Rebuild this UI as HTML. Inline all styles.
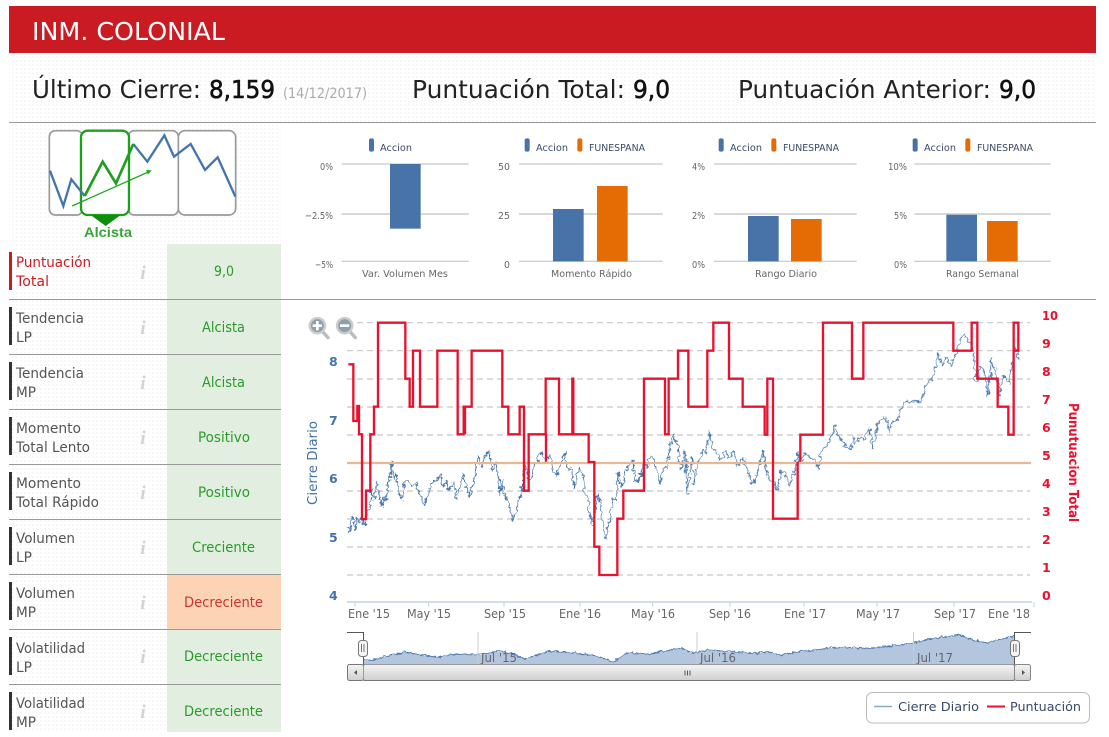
<!DOCTYPE html>
<html><head><meta charset="utf-8"><style>
html,body{margin:0;padding:0;background:#fff;overflow:hidden}
svg{display:block}
text{font-family:"DejaVu Sans","Liberation Sans",sans-serif}
</style></head><body>
<svg xmlns="http://www.w3.org/2000/svg" width="1109" height="737" viewBox="0 0 1109 737">
<defs><pattern id="d" width="4" height="4" patternUnits="userSpaceOnUse"><rect width="4" height="4" fill="#fff"/><rect width="2" height="2" fill="#f8f8f8"/></pattern>
<filter id="j" filterUnits="userSpaceOnUse" x="340" y="320" width="700" height="290" color-interpolation-filters="sRGB"><feTurbulence type="fractalNoise" baseFrequency="0.22" numOctaves="2" seed="4"/><feDisplacementMap in="SourceGraphic" scale="7" xChannelSelector="R" yChannelSelector="G"/></filter>
<filter id="k" filterUnits="userSpaceOnUse" x="360" y="625" width="660" height="42" color-interpolation-filters="sRGB"><feTurbulence type="fractalNoise" baseFrequency="0.3" numOctaves="2" seed="7"/><feDisplacementMap in="SourceGraphic" scale="4" xChannelSelector="R" yChannelSelector="G"/></filter>
</defs>
<rect width="1109" height="737" fill="#fff"/>
<rect x="9" y="53" width="1087" height="69" fill="url(#d)"/>
<rect x="9" y="123" width="272" height="609" fill="url(#d)"/>
<rect x="9" y="6" width="1087" height="47" fill="#cb1b22"/>
<text x="32" y="40" font-size="25" fill="#fff" textLength="193" lengthAdjust="spacingAndGlyphs">INM. COLONIAL</text>
<g font-size="25" fill="#222">
<text x="32" y="98" textLength="169" lengthAdjust="spacingAndGlyphs">Último Cierre:</text>
<text x="209" y="98" fill="#111" stroke="#111" stroke-width=".6" textLength="66" lengthAdjust="spacingAndGlyphs">8,159</text>
<text x="412" y="98" textLength="213" lengthAdjust="spacingAndGlyphs">Puntuación Total:</text>
<text x="633" y="98" fill="#111" stroke="#111" stroke-width=".6" textLength="37" lengthAdjust="spacingAndGlyphs">9,0</text>
<text x="738" y="98" textLength="253" lengthAdjust="spacingAndGlyphs">Puntuación Anterior:</text>
<text x="999" y="98" fill="#111" stroke="#111" stroke-width=".6" textLength="37" lengthAdjust="spacingAndGlyphs">9,0</text>
</g>
<text x="283" y="98" font-size="14" fill="#aaa" textLength="84" lengthAdjust="spacingAndGlyphs">(14/12/2017)</text>
<rect x="9" y="122" width="1087" height="1" fill="#999"/>

<!-- logo -->
<g transform="scale(.33333) translate(0,360)" fill="none">
<rect x="148" y="32" width="100" height="253" rx="18" fill="#fff" stroke="#999" stroke-width="5"/>
<rect x="385" y="32" width="150" height="253" rx="18" fill="#fff" stroke="#999" stroke-width="5"/>
<rect x="535" y="32" width="172" height="253" rx="20" fill="#fff" stroke="#999" stroke-width="5"/>
<rect x="243" y="32" width="144" height="253" rx="20" fill="#fff" stroke="#1f9e1f" stroke-width="7"/>
<polyline points="150,152 190,258 214,178 254,228" stroke="#4575ad" stroke-width="7"/>
<polyline points="400,72 442,125 493,46 522,110 572,72 615,150 653,112 706,230" stroke="#4575ad" stroke-width="7"/>
<polyline points="254,228 308,125 348,190 400,72" stroke="#1f9e1f" stroke-width="8"/>
<line x1="216" y1="258" x2="445" y2="156" stroke="#22a822" stroke-width="4"/>
<polygon points="455,151 438,150 444,164" fill="#22a822"/>
<polygon points="272,285 362,285 317,318" fill="#0c8f0c"/>
</g>
<text x="84" y="237" style="font-family:'Liberation Sans',sans-serif" font-size="14" font-weight="bold" fill="#3aa43a" textLength="48" lengthAdjust="spacingAndGlyphs">Alcista</text>

<!-- table -->
<rect x="167" y="244" width="114" height="488" fill="#e2efe0"/>
<rect x="167" y="575" width="114" height="54" fill="#fdd3b5"/>
<g fill="#999">
<rect x="9" y="299" width="272" height="1"/><rect x="9" y="354" width="272" height="1"/><rect x="9" y="409" width="272" height="1"/><rect x="9" y="464" width="272" height="1"/><rect x="9" y="519" width="272" height="1"/><rect x="9" y="574" width="272" height="1"/><rect x="9" y="629" width="272" height="1"/><rect x="9" y="684" width="272" height="1"/>
<rect x="281" y="299" width="815" height="1"/>
</g>
<rect x="9" y="252" width="3" height="38" fill="#cb1b22"/>
<g fill="#333"><rect x="9" y="307" width="3" height="38"/><rect x="9" y="362" width="3" height="38"/><rect x="9" y="417" width="3" height="38"/><rect x="9" y="472" width="3" height="38"/><rect x="9" y="527" width="3" height="38"/><rect x="9" y="582" width="3" height="38"/><rect x="9" y="637" width="3" height="38"/><rect x="9" y="692" width="3" height="38"/></g>
<g font-size="14" fill="#555">
<text x="16" y="267" fill="#cb1b22" textLength="75" lengthAdjust="spacingAndGlyphs">Puntuación</text><text x="16" y="286" fill="#cb1b22" textLength="33" lengthAdjust="spacingAndGlyphs">Total</text>
<text x="16" y="323" textLength="68" lengthAdjust="spacingAndGlyphs">Tendencia</text><text x="16" y="342" textLength="16" lengthAdjust="spacingAndGlyphs">LP</text>
<text x="16" y="378" textLength="68" lengthAdjust="spacingAndGlyphs">Tendencia</text><text x="16" y="397" textLength="20" lengthAdjust="spacingAndGlyphs">MP</text>
<text x="16" y="433" textLength="65" lengthAdjust="spacingAndGlyphs">Momento</text><text x="16" y="452" textLength="74" lengthAdjust="spacingAndGlyphs">Total Lento</text>
<text x="16" y="488" textLength="65" lengthAdjust="spacingAndGlyphs">Momento</text><text x="16" y="507" textLength="83" lengthAdjust="spacingAndGlyphs">Total Rápido</text>
<text x="16" y="543" textLength="59" lengthAdjust="spacingAndGlyphs">Volumen</text><text x="16" y="562" textLength="16" lengthAdjust="spacingAndGlyphs">LP</text>
<text x="16" y="598" textLength="59" lengthAdjust="spacingAndGlyphs">Volumen</text><text x="16" y="617" textLength="20" lengthAdjust="spacingAndGlyphs">MP</text>
<text x="16" y="653" textLength="69" lengthAdjust="spacingAndGlyphs">Volatilidad</text><text x="16" y="672" textLength="16" lengthAdjust="spacingAndGlyphs">LP</text>
<text x="16" y="708" textLength="69" lengthAdjust="spacingAndGlyphs">Volatilidad</text><text x="16" y="727" textLength="20" lengthAdjust="spacingAndGlyphs">MP</text>
</g>
<g font-size="19" font-weight="bold" font-style="italic" fill="#d2d2d2" text-anchor="middle">
<text x="143" y="279" style="font-family:'Liberation Serif',serif">i</text><text x="143" y="334" style="font-family:'Liberation Serif',serif">i</text><text x="143" y="389" style="font-family:'Liberation Serif',serif">i</text><text x="143" y="444" style="font-family:'Liberation Serif',serif">i</text><text x="143" y="499" style="font-family:'Liberation Serif',serif">i</text><text x="143" y="554" style="font-family:'Liberation Serif',serif">i</text><text x="143" y="609" style="font-family:'Liberation Serif',serif">i</text><text x="143" y="663" style="font-family:'Liberation Serif',serif">i</text><text x="143" y="718" style="font-family:'Liberation Serif',serif">i</text>
</g>
<g font-size="14" fill="#2a9a2a">
<text x="214" y="276" textLength="20" lengthAdjust="spacingAndGlyphs">9,0</text>
<text x="202" y="332" textLength="43" lengthAdjust="spacingAndGlyphs">Alcista</text>
<text x="202" y="387" textLength="43" lengthAdjust="spacingAndGlyphs">Alcista</text>
<text x="198" y="442" textLength="52" lengthAdjust="spacingAndGlyphs">Positivo</text>
<text x="198" y="497" textLength="52" lengthAdjust="spacingAndGlyphs">Positivo</text>
<text x="192" y="552" textLength="63" lengthAdjust="spacingAndGlyphs">Creciente</text>
<text x="184" y="607" fill="#cc3333" textLength="79" lengthAdjust="spacingAndGlyphs">Decreciente</text>
<text x="184" y="661" textLength="79" lengthAdjust="spacingAndGlyphs">Decreciente</text>
<text x="184" y="716" textLength="79" lengthAdjust="spacingAndGlyphs">Decreciente</text>
</g>

<!-- bar charts -->
<g transform="translate(300,130) scale(.33333)">
<g fill="#d8d8d8"><rect x="125" y="249" width="381" height="6"/><rect x="657" y="249" width="431" height="6"/></g>
<g fill="#c4ccd6"><rect x="125" y="100" width="381" height="4"/><rect x="657" y="100" width="431" height="4"/></g>
<g fill="#c0d0e0"><rect x="125" y="392" width="381" height="4"/><rect x="657" y="392" width="431" height="4"/></g>
<rect x="270" y="102" width="92" height="194" fill="#4873a8"/>
<rect x="759" y="237" width="92" height="157" fill="#4873a8"/>
<rect x="891" y="168" width="92" height="226" fill="#e56c05"/>
<rect x="207" y="25" width="15" height="40" rx="6" fill="#4873a8"/>
<rect x="674" y="25" width="15" height="40" rx="6" fill="#4873a8"/>
<rect x="832" y="25" width="15" height="40" rx="6" fill="#e56c05"/>
</g>
<g transform="translate(690,130) scale(.33333)">
<g fill="#d8d8d8"><rect x="72" y="249" width="428" height="6"/><rect x="673" y="249" width="409" height="6"/></g>
<g fill="#c4ccd6"><rect x="72" y="100" width="428" height="4"/><rect x="673" y="100" width="409" height="4"/></g>
<g fill="#c0d0e0"><rect x="72" y="392" width="428" height="4"/><rect x="673" y="392" width="409" height="4"/></g>
<rect x="174" y="258" width="92" height="136" fill="#4873a8"/>
<rect x="303" y="267" width="92" height="127" fill="#e56c05"/>
<rect x="769" y="254" width="92" height="140" fill="#4873a8"/>
<rect x="891" y="273" width="92" height="121" fill="#e56c05"/>
<rect x="86" y="25" width="15" height="40" rx="6" fill="#4873a8"/>
<rect x="244" y="25" width="15" height="40" rx="6" fill="#e56c05"/>
<rect x="668" y="25" width="15" height="40" rx="6" fill="#4873a8"/>
<rect x="826" y="25" width="15" height="40" rx="6" fill="#e56c05"/>
</g>
<g font-size="9.5" fill="#3a4a68">
<text x="380" y="151" textLength="32" lengthAdjust="spacingAndGlyphs">Accion</text>
<text x="536" y="151" textLength="32" lengthAdjust="spacingAndGlyphs">Accion</text><text x="589" y="151" textLength="56" lengthAdjust="spacingAndGlyphs">FUNESPANA</text>
<text x="730" y="151" textLength="32" lengthAdjust="spacingAndGlyphs">Accion</text><text x="783" y="151" textLength="56" lengthAdjust="spacingAndGlyphs">FUNESPANA</text>
<text x="924" y="151" textLength="32" lengthAdjust="spacingAndGlyphs">Accion</text><text x="977" y="151" textLength="56" lengthAdjust="spacingAndGlyphs">FUNESPANA</text>
</g>
<g font-size="10" fill="#666">
<text x="320" y="170" textLength="13" lengthAdjust="spacingAndGlyphs">0%</text>
<text x="305" y="219" textLength="28" lengthAdjust="spacingAndGlyphs">−2.5%</text>
<text x="315" y="268" textLength="18" lengthAdjust="spacingAndGlyphs">−5%</text>
<text x="362" y="277" textLength="86" lengthAdjust="spacingAndGlyphs">Var. Volumen Mes</text>
<text x="498" y="170" textLength="12" lengthAdjust="spacingAndGlyphs">50</text>
<text x="498" y="219" textLength="12" lengthAdjust="spacingAndGlyphs">25</text>
<text x="504" y="268" textLength="6" lengthAdjust="spacingAndGlyphs">0</text>
<text x="551" y="277" textLength="81" lengthAdjust="spacingAndGlyphs">Momento Rápido</text>
<text x="692" y="170" textLength="13" lengthAdjust="spacingAndGlyphs">4%</text>
<text x="692" y="219" textLength="13" lengthAdjust="spacingAndGlyphs">2%</text>
<text x="692" y="268" textLength="13" lengthAdjust="spacingAndGlyphs">0%</text>
<text x="755" y="277" textLength="62" lengthAdjust="spacingAndGlyphs">Rango Diario</text>
<text x="888" y="170" textLength="19" lengthAdjust="spacingAndGlyphs">10%</text>
<text x="894" y="219" textLength="13" lengthAdjust="spacingAndGlyphs">5%</text>
<text x="894" y="268" textLength="13" lengthAdjust="spacingAndGlyphs">0%</text>
<text x="946" y="277" textLength="73" lengthAdjust="spacingAndGlyphs">Rango Semanal</text>
</g>

<!-- main chart grid -->
<g stroke="#c8c8c8" stroke-width="1.2" stroke-dasharray="6 4" fill="none">
<path d="M347 322.7H1030M347 350.7H1030M347 379H1030M347 407H1030M347 435H1030M347 491H1030M347 519H1030M347 547H1030M347 575H1030"/>
</g>
<path d="M347 602H1032" stroke="#c0d0e0" stroke-width="1.5"/>
<path d="M355 602v5M428.7 602v5M504 602v5M580 602v5M652.7 602v5M730 602v5M804 602v5M877 602v5M954 602v5M1034 602v5" stroke="#c0d0e0"/>
<!-- blue line -->
<g filter="url(#j)">
<g fill="none" stroke="#4575ad" stroke-linejoin="round">
<polyline transform="translate(300,305) scale(.33333)" stroke-width="3.2" points="145,665 148,685 155,635 160,640 167,675 172,640 178,655 185,635 195,665 200,620 208,615 212,590 215,555 219,580 222,585 230,530 238,570 245,605 250,580 257,590 262,540 270,520 274,468 280,525 288,505 295,565 307,583 315,530 325,527 335,545 347,530 360,570 373,600 385,570 393,535 405,530 422,505 430,548 440,530 447,555 460,530 470,578 480,540 490,505 500,550 510,575 525,510 535,452 545,485 563,437 570,450 577,497 590,465 600,570 605,530 615,575 630,600 637,650 650,610 665,565 675,470 685,525 695,520 705,480 722,443 735,470 748,450 760,500 770,515 785,470 793,443 805,500 815,490 822,550 835,490 848,510 855,570 862,575 875,660 885,620 893,565 903,600 912,680 918,703 930,630 938,580 947,590 955,500 965,550 980,490 998,462 1005,530 1020,520 1030,470 1040,490 1050,455 1060,460 1070,500 1080,535 1090,490 1100,490 1110,420 1122,388 1132,415 1140,480"/>
<polyline transform="translate(680,305) scale(.33333)" stroke-width="3.2" points="0,460 5,495 15,440 22,568 35,455 42,535 55,480 68,433 80,445 88,380 95,430 110,440 122,470 135,437 145,460 160,437 172,480 188,460 200,485 218,540 235,490 248,437 258,490 270,525 280,530 292,555 305,500 315,500 327,545 345,497 352,445 362,470 375,445 395,460 417,490 425,440 445,415 465,365 480,405 510,435 520,395 527,420 540,395 550,405 568,370 578,430 595,350 615,335 627,380 640,345 655,345 665,300 680,285 690,295 705,285 720,295 740,235 760,220 775,143 785,180 800,155 812,185 825,150 840,110 851,85 860,105 878,125 883,160 887,228 893,230 900,185 912,190 924,275 935,160 950,215 958,270 968,215 978,215 988,235 997,165 1005,125 1018,170"/>
</g>
</g>
<path d="M347 463H1031" stroke="#e8b896" stroke-width="2.2"/>
<!-- red line -->
<g fill="none" stroke="#ea112e" stroke-linejoin="miter">
<path transform="translate(300,305) scale(.33333)" stroke-width="7" d="M145 178H160V348H172V303H177V388H186V642H198V557H211V388H222V305H234V53H316V221H329V305H339V137H360V305H412V137H473V388H491V305H495V388M495 305H515V137H607V305H625V388H659V305H672V557H686V388H738V470M737 388V221H777V388H817V221H820V388H866V471H883V725H898V810H952V641H970V557H1032V221H1095V388H1106V221H1134V137H1140"/>
<path transform="translate(680,305) scale(.33333)" stroke-width="7" d="M0 137H25V305H82V137H100V53H147V221H188V305H254V389H262V221H279V641H353V470M361 470V389H429V53H516V221H550V53H820V137H875V53H892V221H953V305H985V389H1001V53H1015V137H1003"/>
</g>
<!-- zoom icons -->
<g transform="translate(300,305) scale(.33333)">
<line x1="68" y1="80" x2="84" y2="98" stroke="#bbb" stroke-width="10" stroke-linecap="round"/>
<circle cx="52" cy="62" r="23" fill="#8fa0ad" stroke="#ccc" stroke-width="7"/>
<path d="M38 62H66M52 48V76" stroke="#fff" stroke-width="8"/>
<line x1="150" y1="80" x2="166" y2="98" stroke="#bbb" stroke-width="10" stroke-linecap="round"/>
<circle cx="134" cy="62" r="23" fill="#8fa0ad" stroke="#ccc" stroke-width="7"/>
<path d="M120 62H148" stroke="#fff" stroke-width="8"/>
</g>
<!-- axes labels -->
<g font-size="12.5" font-weight="bold" fill="#4572a7">
<text x="329" y="366">8</text><text x="329" y="425">7</text><text x="329" y="483">6</text><text x="329" y="542">5</text><text x="329" y="600">4</text>
</g>
<g font-size="12.5" font-weight="bold" fill="#ea112e">
<text x="1042" y="320" textLength="16" lengthAdjust="spacingAndGlyphs">10</text><text x="1042" y="348">9</text><text x="1042" y="376">8</text><text x="1042" y="404">7</text><text x="1042" y="432">6</text><text x="1042" y="460">5</text><text x="1042" y="488">4</text><text x="1042" y="516">3</text><text x="1042" y="544">2</text><text x="1042" y="572">1</text><text x="1042" y="600">0</text>
</g>
<text x="317" y="505" transform="rotate(-90 317 505)" font-size="13" fill="#4572a7" textLength="84" lengthAdjust="spacingAndGlyphs">Cierre Diario</text>
<text x="1069" y="403" transform="rotate(90 1069 403)" font-size="13" font-weight="bold" fill="#ea112e" textLength="119" lengthAdjust="spacingAndGlyphs">Punutuacion Total</text>
<g font-size="12" fill="#666">
<text x="348" y="618" textLength="42" lengthAdjust="spacingAndGlyphs">Ene '15</text>
<text x="407" y="618" textLength="44" lengthAdjust="spacingAndGlyphs">May '15</text>
<text x="484" y="618" textLength="42" lengthAdjust="spacingAndGlyphs">Sep '15</text>
<text x="559" y="618" textLength="42" lengthAdjust="spacingAndGlyphs">Ene '16</text>
<text x="631" y="618" textLength="44" lengthAdjust="spacingAndGlyphs">May '16</text>
<text x="709" y="618" textLength="42" lengthAdjust="spacingAndGlyphs">Sep '16</text>
<text x="784" y="618" textLength="42" lengthAdjust="spacingAndGlyphs">Ene '17</text>
<text x="856" y="618" textLength="44" lengthAdjust="spacingAndGlyphs">May '17</text>
<text x="934" y="618" textLength="42" lengthAdjust="spacingAndGlyphs">Sep '17</text>
<text x="988" y="618" textLength="42" lengthAdjust="spacingAndGlyphs">Ene '18</text>
</g>
<!-- navigator -->
<path d="M363.5 660 L373 660 385 656.5 405 652 420 655 437 657 453 654 478 655 500 651 513 654 525 659 550 651 573 652.7 593 655 613 661.7 627 652.7 650 654 680 648 693 653 707 650 720 650.7 753 653.3 767 651.7 780 655 800 651.7 833 647.7 870 648.3 913 643.3 933 638.3 960 635 973 640 987 642.7 997 640 1014 636 V664 H363.5Z" fill="#b3c6de"/>
<g filter="url(#k)"><path d="M363.5 660 L373 660 385 656.5 405 652 420 655 437 657 453 654 478 655 500 651 513 654 525 659 550 651 573 652.7 593 655 613 661.7 627 652.7 650 654 680 648 693 653 707 650 720 650.7 753 653.3 767 651.7 780 655 800 651.7 833 647.7 870 648.3 913 643.3 933 638.3 960 635 973 640 987 642.7 997 640 1014 636" fill="none" stroke="#4575ad" stroke-width="1"/></g>
<path d="M478 632V664M697 632V664M913.5 632V664" stroke="#ccc"/>
<g font-size="12" fill="#666">
<text x="481" y="662" textLength="36" lengthAdjust="spacingAndGlyphs">Jul '15</text>
<text x="700" y="662" textLength="36" lengthAdjust="spacingAndGlyphs">Jul '16</text>
<text x="917" y="662" textLength="36" lengthAdjust="spacingAndGlyphs">Jul '17</text>
</g>
<path d="M347 632.5H363.5V664M1014.5 664V632.5H1031" fill="none" stroke="#555"/>
<path d="M363 664.5H1015" stroke="#667"/>
<defs><linearGradient id="s" x1="0" y1="0" x2="0" y2="1"><stop offset="0" stop-color="#f4f4f4"/><stop offset="1" stop-color="#cfcfcf"/></linearGradient></defs>
<rect x="347.5" y="664.5" width="16" height="16" rx="2" fill="url(#s)" stroke="#777"/>
<rect x="363.5" y="664.5" width="651" height="16" rx="2" fill="url(#s)" stroke="#999"/>
<path d="M363.5 680.5H1014.5" stroke="#777"/>
<rect x="1014.5" y="664.5" width="16" height="16" rx="2" fill="url(#s)" stroke="#888"/>
<polygon points="354,672.5 357,670 357,675" fill="#555"/>
<polygon points="1025,672.5 1022,670 1022,675" fill="#555"/>
<path d="M685 670.5v5M687.5 670.5v5M690 670.5v5" stroke="#555"/>
<rect x="358.5" y="640.5" width="9" height="16" rx="3" fill="#f4f4f4" stroke="#777"/>
<path d="M361.5 644v8M364 644v8" stroke="#777"/>
<rect x="1010.5" y="640.5" width="9" height="16" rx="3" fill="#f4f4f4" stroke="#777"/>
<path d="M1013.5 644v8M1016 644v8" stroke="#777"/>
<!-- legend -->
<rect x="866.5" y="692.5" width="223" height="30.5" rx="6" fill="#fff" stroke="#bbb"/>
<line x1="874" y1="706.5" x2="892" y2="706.5" stroke="#8ea8c8" stroke-width="1.5"/>
<line x1="987" y1="706.5" x2="1005" y2="706.5" stroke="#ea112e" stroke-width="2"/>
<g font-size="12.5" fill="#3a4a68">
<text x="898" y="711" textLength="81" lengthAdjust="spacingAndGlyphs">Cierre Diario</text>
<text x="1010" y="711" textLength="71" lengthAdjust="spacingAndGlyphs">Puntuación</text>
</g>
</svg>
</body></html>
